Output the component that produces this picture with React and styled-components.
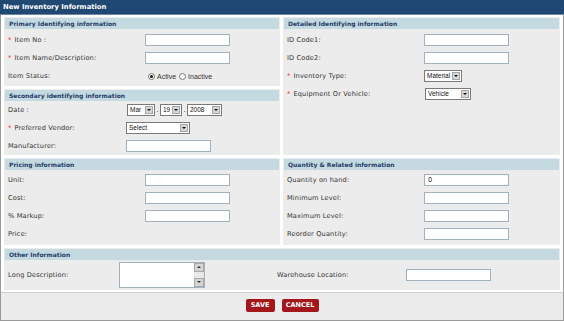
import React from "react";
import styled, { createGlobalStyle } from "styled-components";

const GlobalStyle = createGlobalStyle`
  body {
    margin: 0;
    background: #ffffff;
    font-family: "DejaVu Sans", Verdana, sans-serif;
  }
`;

const Frame = styled.div`
  width: 564px;
  height: 321px;
  box-sizing: border-box;
  border: 1px solid #9a9a9a;
  border-top: none;
  background: #ffffff;
  display: flex;
  flex-direction: column;
`;

const TitleBar = styled.div`
  height: 14px;
  background: #1f4872;
  border-bottom: 1px solid #6c88a4;
  color: #ffffff;
  font-weight: bold;
  font-size: 6.8px;
  line-height: 14px;
  padding-left: 3px;
  margin: 0 -1px;
`;

const Body = styled.div`
  padding: 2px 3px 0 3px;
  display: flex;
  flex-direction: column;
  gap: 3px;
`;

const Grid = styled.div`
  display: grid;
  grid-template-columns: 276px 277px;
  column-gap: 3px;
`;

const Stack = styled.div`
  display: flex;
  flex-direction: column;
  gap: 3px;
`;

const Panel = styled.div`
  background: #ececec;
  padding: 1px;
  height: ${({ h }) => (h ? `${h}px` : "auto")};
  box-sizing: border-box;
`;

const Header = styled.div`
  height: 11px;
  background: #c5d9e0;
  color: #1f3d68;
  font-weight: bold;
  font-size: 6px;
  line-height: 11px;
  padding-left: 4px;
  margin-bottom: ${({ gap }) => gap ?? 2}px;
`;

const Row = styled.div`
  height: ${({ h }) => h || 18}px;
  display: flex;
  align-items: center;
  font-size: 6.6px;
  color: #333333;
`;

const Label = styled.div`
  width: ${({ w }) => w || 140}px;
  box-sizing: border-box;
  padding-left: 3px;
  flex-shrink: 0;
  letter-spacing: 0.15px;
  margin-left: ${({ ml }) => ml || 0}px;
`;

const Star = styled.span`
  color: #e0302a;
  margin-right: 3px;
`;

const TextInput = styled.div`
  width: 80px;
  height: 10px;
  background: #ffffff;
  border: 1px solid #9fb2bd;
  font-size: 6.6px;
  line-height: 10px;
  padding-left: 3px;
  box-sizing: content-box;
`;

const SelectBox = styled.div`
  width: ${({ w }) => w}px;
  height: 12px;
  box-sizing: border-box;
  background: #ffffff;
  border: 1px solid #7a7a7a;
  display: flex;
  align-items: stretch;
  font-family: "Liberation Sans", Arial, sans-serif;
  font-size: 6.5px;
  color: #111;
`;

const SelectText = styled.div`
  flex: 1;
  padding-left: 2px;
  line-height: 10px;
  overflow: hidden;
  white-space: nowrap;
`;

const Arrow = styled.div`
  width: 8px;
  margin: 1px;
  background: #d6d6d6;
  border: 1px solid #a6a6a6;
  box-sizing: border-box;
  display: flex;
  align-items: center;
  justify-content: center;
  &::after {
    content: "";
    border-left: 2px solid transparent;
    border-right: 2px solid transparent;
    border-top: 2px solid #111;
  }
`;

const Dot = styled.span`
  width: 5px;
  text-align: center;
  font-size: 7px;
`;

const RadioGroup = styled.div`
  display: flex;
  align-items: center;
  margin-left: 3px;
  font-family: "Liberation Sans", Arial, sans-serif;
  font-size: 7px;
`;

const Radio = styled.span`
  width: 5px;
  height: 5px;
  border-radius: 50%;
  border: 1px solid #777;
  background: #fff;
  display: inline-flex;
  align-items: center;
  justify-content: center;
  margin-right: 2px;
  margin-left: ${({ ml }) => ml || 0}px;
  &::after {
    content: "";
    width: 3px;
    height: 3px;
    border-radius: 50%;
    background: ${({ on }) => (on ? "#111" : "transparent")};
  }
`;

const TextArea = styled.div`
  width: 84px;
  height: 24px;
  border: 1px solid #9fb2bd;
  background: #fff;
  display: flex;
  justify-content: flex-end;
`;

const ScrollBar = styled.div`
  width: 10px;
  background: #e8e8e8;
  display: flex;
  flex-direction: column;
  justify-content: space-between;
`;

const ScrollBtn = styled.div`
  height: 9px;
  background: #d4d4d4;
  border: 1px solid #a8a8a8;
  box-sizing: border-box;
  display: flex;
  align-items: center;
  justify-content: center;
  &::after {
    content: "";
    border-left: 2px solid transparent;
    border-right: 2px solid transparent;
    ${({ up }) =>
      up ? "border-bottom: 2px solid #333;" : "border-top: 2px solid #333;"}
  }
`;

const Footer = styled.div`
  margin-top: 2px;
  flex: 1;
  background: #ececec;
  border-top: 1px solid #cfcfcf;
  display: flex;
  justify-content: center;
  align-items: flex-start;
  padding-top: 6px;
  gap: 7px;
`;

const Button = styled.div`
  width: ${({ w }) => w}px;
  height: 13px;
  background: #a5161b;
  border-radius: 2px;
  color: #ffffff;
  font-family: "DejaVu Sans", Verdana, sans-serif;
  font-weight: bold;
  font-size: 6.5px;
  line-height: 13px;
  text-align: center;
`;

const Field = ({ label, req, children, lw }) => (
  <Row>
    <Label w={lw}>
      {req && <Star>*</Star>}
      {label}
    </Label>
    {children}
  </Row>
);

const Select = ({ w, value }) => (
  <SelectBox w={w}>
    <SelectText>{value}</SelectText>
    <Arrow />
  </SelectBox>
);

export default function App() {
  return (
    <>
      <GlobalStyle />
      <Frame>
        <TitleBar>New Inventory Information</TitleBar>
        <Body>
          <Grid>
            <Stack>
              <Panel h={69}>
                <Header gap={2}>Primary Identifying information</Header>
                <Field label="Item No :" req>
                  <TextInput />
                </Field>
                <Field label="Item Name/Description:" req>
                  <TextInput />
                </Field>
                <Field label="Item Status:">
                  <RadioGroup>
                    <Radio on />
                    Active
                    <Radio ml={3} />
                    Inactive
                  </RadioGroup>
                </Field>
              </Panel>
              <Panel h={66}>
                <Header gap={0}>Secondary identifying information</Header>
                <Field label="Date :" lw={122}>
                  <Select w={28} value="Mar" />
                  <Dot>.</Dot>
                  <Select w={22} value="19" />
                  <Dot>.</Dot>
                  <Select w={35} value="2008" />
                </Field>
                <Field label="Preferred Vendor:" req lw={121}>
                  <Select w={64} value="Select" />
                </Field>
                <Field label="Manufacturer:" lw={121}>
                  <TextInput />
                </Field>
              </Panel>
            </Stack>
            <Panel>
              <Header gap={2}>Detailed Identifying information</Header>
              <Field label="ID Code1:">
                <TextInput />
              </Field>
              <Field label="ID Code2:">
                <TextInput />
              </Field>
              <Field label="Inventory Type:" req>
                <Select w={38} value="Material" />
              </Field>
              <Field label="Equipment Or Vehicle:" req lw={141}>
                <Select w={46} value="Vehicle" />
              </Field>
            </Panel>
          </Grid>
          <Grid>
            <Panel h={87}>
              <Header gap={1}>Pricing information</Header>
              <Field label="Unit:">
                <TextInput />
              </Field>
              <Field label="Cost:">
                <TextInput />
              </Field>
              <Field label="% Markup:">
                <TextInput />
              </Field>
              <Field label="Price:" />
            </Panel>
            <Panel h={87}>
              <Header gap={1}>Quantity &amp; Related information</Header>
              <Field label="Quantity on hand:">
                <TextInput>0</TextInput>
              </Field>
              <Field label="Minimum Level:">
                <TextInput />
              </Field>
              <Field label="Maximum Level:">
                <TextInput />
              </Field>
              <Field label="Reorder Quantity:">
                <TextInput />
              </Field>
            </Panel>
          </Grid>
          <Panel h={42}>
            <Header gap={1}>Other Information</Header>
            <Row h={27}>
              <Label w={114}>Long Description:</Label>
              <TextArea>
                <ScrollBar>
                  <ScrollBtn up />
                  <ScrollBtn />
                </ScrollBar>
              </TextArea>
              <Label w={132} ml={69}>
                Warehouse Location:
              </Label>
              <TextInput />
            </Row>
          </Panel>
        </Body>
        <Footer>
          <Button w={29}>SAVE</Button>
          <Button w={37}>CANCEL</Button>
        </Footer>
      </Frame>
    </>
  );
}
